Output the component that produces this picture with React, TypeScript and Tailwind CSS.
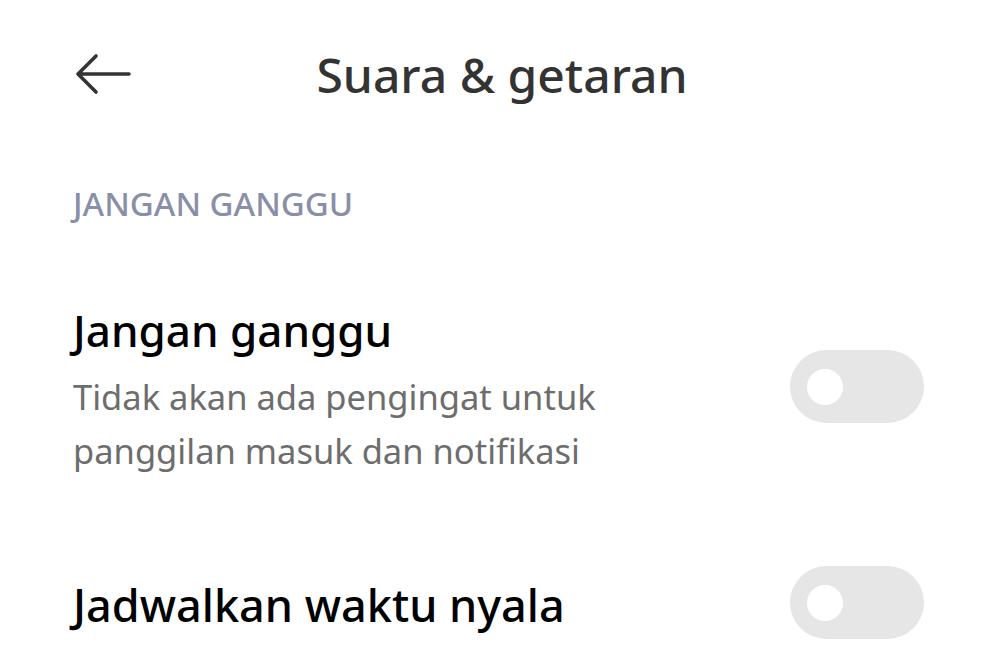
import React from 'react';

const Toggle: React.FC<{ className?: string }> = ({ className = '' }) => (
  <div className={`w-[134px] h-[73px] rounded-full bg-[#e6e6e6] flex items-center pl-[17px] shrink-0 ${className}`}>
    <div className="w-[36px] h-[36px] rounded-full bg-white" />
  </div>
);

export const App: React.FC = () => {
  return (
    <div className="w-[1000px] h-[655px] bg-white overflow-hidden font-['Noto_Sans',sans-serif]">
      <header className="h-[150px] flex items-center relative">
        <button className="absolute left-[74px] top-[52px] w-[60px] h-[44px] flex items-center">
          <svg width="58" height="44" viewBox="0 0 58 44" fill="none">
            <path d="M4 22 H55 M22 4 L4 22 L22 40" stroke="#333" strokeWidth="3.6" strokeLinecap="round" strokeLinejoin="round" />
          </svg>
        </button>
        <h1 className="w-full text-center pl-[4px] pb-[78px] mt-[78px] text-[48px] leading-none font-medium text-[#333]">
          Suara &amp; getaran
        </h1>
      </header>

      <main className="px-[73px]">
        <p className="mt-[37px] text-[33px] leading-none font-medium text-[#8a8fa8]">JANGAN GANGGU</p>

        <div className="mt-[88px] flex items-start justify-between pr-[3px]">
          <div>
            <p className="text-[44px] leading-none font-medium text-black">Jangan ganggu</p>
            <p className="mt-[18px] text-[34.5px] leading-[54px] text-[#6d6d6d] w-[570px]">
              Tidak akan ada pengingat untuk panggilan masuk dan notifikasi
            </p>
          </div>
          <Toggle className="mt-[42px]" />
        </div>

        <div className="mt-[88px] flex items-start justify-between pr-[3px]">
          <p className="mt-[16px] text-[45px] leading-none font-medium text-black">Jadwalkan waktu nyala</p>
          <Toggle />
        </div>
      </main>
    </div>
  );
};

export default App;
